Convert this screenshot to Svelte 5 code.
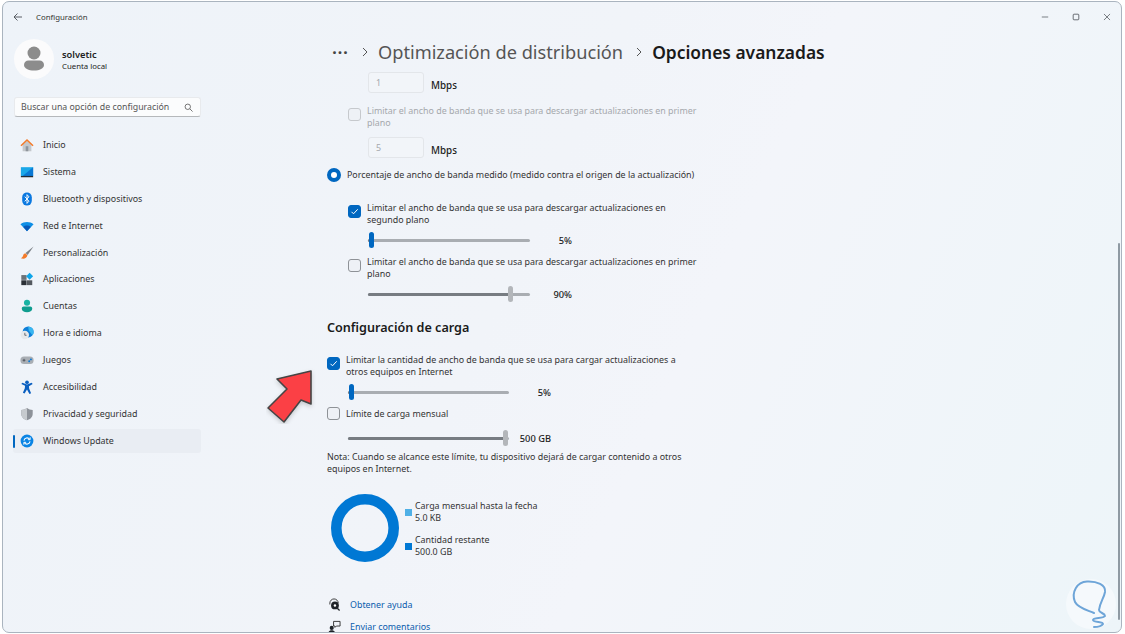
<script>
    const nav = [
        { id: 'home', label: 'Inicio' },
        { id: 'system', label: 'Sistema' },
        { id: 'bt', label: 'Bluetooth y dispositivos' },
        { id: 'wifi', label: 'Red e Internet' },
        { id: 'brush', label: 'Personalización' },
        { id: 'apps', label: 'Aplicaciones' },
        { id: 'user', label: 'Cuentas' },
        { id: 'time', label: 'Hora e idioma' },
        { id: 'games', label: 'Juegos' },
        { id: 'access', label: 'Accesibilidad' },
        { id: 'shield', label: 'Privacidad y seguridad' },
        { id: 'update', label: 'Windows Update', active: true }
    ];
</script>

{#snippet navIcon(id)}
    <svg class="nav-icon" viewBox="0 0 16 16" aria-hidden="true">
        {#if id === 'home'}
            <path d="M3 7.500 8 3l5 4.500V15H3z" fill="#c4c8cc" />
            <path d="M6.500 15V9.500h3V15z" fill="#8f959c" />
            <path d="M.5 8.300 8 1l7.500 7.300-1.200 1.100L8 3.400 1.700 9.400z" fill="#f47b2a" />
        {:else if id === 'system'}
            <rect x="1" y="2.500" width="14" height="10" fill="#1aa7e8" />
            <path d="M15 2.500v10H3z" fill="#0a78d4" />
            <rect x="1" y="12.500" width="14" height="1.500" fill="#222c36" />
        {:else if id === 'bt'}
            <rect x="2.500" y=".5" width="11" height="15" rx="5.500" fill="#0a78e0" />
            <path d="m5.500 5.300 4.700 5.200L8 13V3l2.200 2.500-4.700 5.200" fill="none" stroke="#fff" stroke-width="1.100" />
        {:else if id === 'wifi'}
            <path d="M.5 6C4.500 2.500 11.500 2.500 15.500 6L8 14z" fill="#0f8fe6" />
            <path d="M3.800 9c2.300-2 6.100-2 8.400 0L8 14z" fill="#0758b8" />
        {:else if id === 'brush'}
            <path d="M15.500.5 6.300 8l2.400 2.400z" fill="#7d8288" />
            <path d="M6 8.300c-2.300.5-2.200 2.600-2.900 3.800-.4.800-1.200 1.300-2.100 1.900 3 1 6.800.5 7.500-3.400z" fill="#f47b2a" />
        {:else if id === 'apps'}
            <rect x="1.500" y="3.500" width="6" height="5.500" fill="#6c7278" />
            <rect x="1.500" y="9.500" width="6" height="5.500" fill="#2b3036" />
            <rect x="8" y="9.500" width="6" height="5.500" fill="#54595f" />
            <path d="m11 .8 4 4-4 4-4-4z" fill="#0ea5e9" />
        {:else if id === 'user'}
            <circle cx="8" cy="4.300" r="3.500" fill="#17b3a3" />
            <path d="M2 11c0-1.400 1-2.300 2.300-2.300h7.400c1.300 0 2.300.9 2.300 2.300 0 2.600-2.700 4-6 4s-6-1.400-6-4z" fill="#0f9d8f" />
        {:else if id === 'time'}
            <circle cx="9.300" cy="6.800" r="6.300" fill="#0f7fd8" />
            <path d="M9.300.5a6.300 6.300 0 0 1 6.300 6.300c0 1.500-.5 2.800-1.400 3.800L10 5z" fill="#38b6f0" />
            <circle cx="5.500" cy="10.300" r="4.800" fill="#e6e8eb" />
            <path d="M5.500 7.800v2.800h2" fill="none" stroke="#4a5058" stroke-width=".9" />
        {:else if id === 'games'}
            <rect x=".5" y="4" width="15" height="8.500" rx="4" fill="#a9aeb4" />
            <path d="M3 8.300h3.200M4.600 6.700v3.200" stroke="#4a5058" stroke-width="1" />
            <circle cx="10.500" cy="9.500" r="1.100" fill="#0a78d4" />
            <circle cx="12.500" cy="7.300" r="1.100" fill="#0a78d4" />
        {:else if id === 'access'}
            <circle cx="8" cy="2.600" r="2.100" fill="#0a5fc0" />
            <path d="M1.500 4.500 2.700 3 8 5.200 13.300 3l1.200 1.500-4.300 2.700.3 2.800 2.200 5-1.900.9L8 10.800l-2.800 4.600-1.900-.9 2.200-5 .3-2.800z" fill="#0a5fc0" />
        {:else if id === 'shield'}
            <path d="M8 1c1.800 1.400 4 2.200 6.500 2.300v4.300c0 3.700-2.600 6.400-6.500 7.400-3.900-1-6.500-3.700-6.500-7.400V3.300C4 3.200 6.200 2.400 8 1z" fill="#8d9299" />
            <path d="M8 1C6.200 2.400 4 3.200 1.500 3.300v4.300c0 3.700 2.600 6.400 6.500 7.400z" fill="#c6cace" />
        {:else}
            <circle cx="8" cy="8" r="7.300" fill="#0a84e4" />
            <path d="M4.500 7.500A3.600 3.600 0 0 1 11 6M11.500 8.500A3.600 3.600 0 0 1 5 10" fill="none" stroke="#fff" stroke-width="1.200" />
            <path d="M11.600 3.800V6.500H9M4.400 12.200V9.500H7" fill="none" stroke="#fff" stroke-width="1.100" />
        {/if}
    </svg>
{/snippet}

{#snippet check(on, disabled)}
    <span class="box" class:on class:disabled>
        {#if on}
            <svg viewBox="0 0 13 13" aria-hidden="true"><path d="M3.500 6.800 5.500 8.800 9.700 4.300" fill="none" stroke="#fff" stroke-width="1" /></svg>
        {/if}
    </span>
{/snippet}

{#snippet slider(pct, accent, width, value, valueWidth)}
    <div class="slider-row">
        <div class="track" style="width:{width}px">
            <div class="fill" style="width:{pct}%"></div>
            <div class="thumb" class:accent style="left:calc({pct}% - 2.500px)"></div>
        </div>
        <span class="value" style="width:{valueWidth}px">{value}</span>
    </div>
{/snippet}

<div class="window">
    <header class="titlebar">
        <svg class="back" viewBox="0 0 10 10" aria-hidden="true"><path d="M9 5H1M4.500 1.500 1 5l3.500 3.500" fill="none" stroke="#4a4f55" stroke-width=".9" /></svg>
        <span class="app-title">Configuración</span>
        <div class="controls">
            <svg viewBox="0 0 10 10" aria-hidden="true"><path d="M1 5h8" stroke="#6a6f75" stroke-width="1.100" /></svg>
            <svg viewBox="0 0 10 10" aria-hidden="true"><rect x="1.500" y="1.500" width="7" height="7" rx="1" fill="none" stroke="#5a5f65" stroke-width="1.100" /></svg>
            <svg viewBox="0 0 10 10" aria-hidden="true"><path d="m1.200 1.200 7.600 7.600M8.800 1.200 1.200 8.800" stroke="#5a5f65" stroke-width="1" /></svg>
        </div>
    </header>

    <div class="body">
        <aside class="sidebar">
            <div class="profile">
                <div class="avatar">
                    <svg viewBox="0 0 40 40" aria-hidden="true">
                        <circle cx="20" cy="14" r="6.500" fill="#8c8c8c" />
                        <path d="M10 26c0-3 2-4.500 4.500-4.500h11c2.500 0 4.500 1.500 4.500 4.500 0 3.500-4.500 5.500-10 5.500S10 29.500 10 26z" fill="#8c8c8c" />
                    </svg>
                </div>
                <div class="who">
                    <strong>solvetic</strong>
                    <span>Cuenta local</span>
                </div>
            </div>

            <div class="search">
                <span>Buscar una opción de configuración</span>
                <svg viewBox="0 0 10 10" aria-hidden="true"><circle cx="4.200" cy="4.200" r="3" fill="none" stroke="#555" stroke-width=".9" /><path d="m6.500 6.500 3 3" stroke="#555" stroke-width=".9" /></svg>
            </div>

            <nav>
                {#each nav as item}
                    <div class="nav-item" class:active={item.active}>
                        {@render navIcon(item.id)}
                        <span>{item.label}</span>
                    </div>
                {/each}
            </nav>
        </aside>

        <main>
            <div class="crumbs">
                <span class="dots">···</span>
                <svg class="chev" viewBox="0 0 8 10" aria-hidden="true"><path d="m2 1 4 4-4 4" fill="none" stroke="#555" stroke-width="1" /></svg>
                <span class="crumb">Optimización de distribución</span>
                <svg class="chev" viewBox="0 0 8 10" aria-hidden="true"><path d="m2 1 4 4-4 4" fill="none" stroke="#555" stroke-width="1" /></svg>
                <span class="crumb current">Opciones avanzadas</span>
            </div>

            <div class="num-row">
                <span class="num">1</span>
                <span class="unit">Mbps</span>
            </div>

            <div class="check-row indent muted gap-12">
                {@render check(false, true)}
                <p>Limitar el ancho de banda que se usa para descargar actualizaciones en primer plano</p>
            </div>

            <div class="num-row gap-8">
                <span class="num">5</span>
                <span class="unit">Mbps</span>
            </div>

            <div class="radio-row">
                <span class="radio"></span>
                <p>Porcentaje de ancho de banda medido (medido contra el origen de la actualización)</p>
            </div>

            <div class="check-row indent gap-21">
                {@render check(true, false)}
                <p>Limitar el ancho de banda que se usa para descargar actualizaciones en segundo plano</p>
            </div>
            <div class="slider-wrap deep">{@render slider(2, true, 162, '5%', 42)}</div>

            <div class="check-row indent gap-8">
                {@render check(false, false)}
                <p>Limitar el ancho de banda que se usa para descargar actualizaciones en primer plano</p>
            </div>
            <div class="slider-wrap deep">{@render slider(88, false, 162, '90%', 42)}</div>

            <h2>Configuración de carga</h2>

            <div class="check-row first wide">
                {@render check(true, false)}
                <p>Limitar la cantidad de ancho de banda que se usa para cargar actualizaciones a otros equipos en Internet</p>
            </div>
            <div class="slider-wrap shallow">{@render slider(2, true, 161, '5%', 42)}</div>

            <div class="check-row single">
                {@render check(false, false)}
                <p>Límite de carga mensual</p>
            </div>
            <div class="slider-wrap shallow far">{@render slider(98, false, 161, '500 GB', 42)}</div>

            <p class="note">Nota: Cuando se alcance este límite, tu dispositivo dejará de cargar contenido a otros equipos en Internet.</p>

            <div class="usage">
                <svg class="donut" viewBox="0 0 68 68" aria-hidden="true">
                    <circle cx="34" cy="34" r="28.700" fill="none" stroke="#0078d4" stroke-width="10.600" />
                </svg>
                <div class="legend">
                    <div class="legend-item">
                        <i class="sq light"></i>
                        <div><p>Carga mensual hasta la fecha</p><p>5.0 KB</p></div>
                    </div>
                    <div class="legend-item">
                        <i class="sq"></i>
                        <div><p>Cantidad restante</p><p>500.0 GB</p></div>
                    </div>
                </div>
            </div>

            <div class="link-row help">
                <svg viewBox="0 0 14 14" aria-hidden="true">
                    <path d="M2 7V5.500a4.500 4.500 0 0 1 9 0" fill="none" stroke="#333" stroke-width="1" />
                    <circle cx="7.500" cy="8" r="4.200" fill="#1f2328" />
                    <path d="m10 11 2.500 2.500" stroke="#1f2328" stroke-width="1.400" />
                    <circle cx="7.500" cy="8" r="1.300" fill="#fff" />
                </svg>
                <span>Obtener ayuda</span>
            </div>
            <div class="link-row">
                <svg viewBox="0 0 14 14" aria-hidden="true">
                    <circle cx="4" cy="8.500" r="2.200" fill="#1f2328" />
                    <path d="M.500 14c0-2 1.500-3 3.500-3s3.500 1 3.500 3z" fill="#1f2328" />
                    <path d="M6 1.500h7v5H9L7.500 8V6.500H6z" fill="none" stroke="#333" stroke-width="1" />
                </svg>
                <span>Enviar comentarios</span>
            </div>
        </main>
    </div>

    <div class="scrollbar"></div>

    <!-- overlays on the screenshot -->
    <svg class="arrow" viewBox="0 0 50 56" aria-hidden="true">
        <defs>
            <filter id="arrow-shadow" x="-30%" y="-30%" width="160%" height="160%">
                <feDropShadow dx="0" dy="2" stdDeviation="2" flood-color="#000" flood-opacity=".18" />
            </filter>
        </defs>
        <path d="M45 3 11 11 21 21 2 40 18 54 35 32 45 36Z" fill="#fb4144" stroke="#454545" stroke-width="1.600" stroke-linejoin="round" filter="url(#arrow-shadow)" />
    </svg>

    <svg class="watermark" viewBox="0 0 52 52" aria-hidden="true">
        <circle cx="26" cy="26" r="25" fill="#f5f9fc" />
        <path d="M29 35C22 32 13 30 10 24 6 14 12 4 22 3.500 32 3 41 7 40 14 39 20 35 24 34 32 34 35 40 35 40 38 38 41 28 39 28 42 29 45 38 43 38 46 36 49 32 49 29 49" fill="none" stroke="#6ea5d8" stroke-width="2" stroke-linecap="round" stroke-linejoin="round" />
    </svg>
</div>

<style>
    :global(body) {
        background: #fff;
        font-family: "Noto Sans", "Liberation Sans", sans-serif;
        color: #1b1b1b;
    }

    p {
        margin: 0;
    }

    .window {
        position: relative;
        box-sizing: border-box;
        width: 1120px;
        height: 632px;
        margin: 1px 0 0 2px;
        border: 1px solid #aab4bf;
        border-radius: 7px;
        overflow: hidden;
        background: linear-gradient(115deg, #eef3f9 0%, #f1f4f9 45%, #f3f5fa 60%, #edf5f9 100%);
        font-size: 8.900px;
        line-height: 12px;
    }

    .titlebar {
        display: flex;
        align-items: center;
        height: 30px;
        padding-left: 10px;
        font-size: 7.800px;
        color: #333;
    }

    .back {
        width: 10px;
        height: 10px;
    }

    .app-title {
        margin-left: 13px;
    }

    .controls {
        display: flex;
        gap: 23px;
        margin-left: auto;
        margin-right: 10px;
    }

    .controls svg {
        width: 8px;
        height: 8px;
    }

    .body {
        display: flex;
    }

    .sidebar {
        flex: none;
        width: 207px;
        padding-left: 10px;
        box-sizing: border-box;
    }

    .profile {
        display: flex;
        align-items: center;
        gap: 8px;
        margin: 7px 0 0 1px;
    }

    .avatar {
        width: 40px;
        height: 40px;
        border-radius: 50%;
        background: #fbfbfc;
    }

    .avatar svg {
        display: block;
    }

    .who {
        display: flex;
        flex-direction: column;
        gap: 1px;
        padding-top: 2px;
        font-size: 7.800px;
        line-height: 11px;
        color: #222;
    }

    .who strong {
        font-size: 9.300px;
        font-weight: 600;
    }

    .search {
        display: flex;
        align-items: center;
        justify-content: space-between;
        box-sizing: border-box;
        width: 187px;
        height: 20px;
        margin: 18px 0 0 1px;
        padding: 0 7px 0 6px;
        background: #fbfcfd;
        border: 1px solid #e8eaed;
        border-bottom-color: #b5b8bb;
        border-radius: 3px;
        color: #555;
        font-size: 8.800px;
    }

    .search svg {
        width: 9px;
        height: 9px;
    }

    nav {
        display: flex;
        flex-direction: column;
        gap: 2.900px;
        margin-top: 16px;
    }

    .nav-item {
        position: relative;
        display: flex;
        align-items: center;
        gap: 9px;
        width: 188px;
        height: 24px;
        padding-left: 7px;
        box-sizing: border-box;
        color: #333;
        border-radius: 3px;
    }

    .nav-item.active {
        background: #e9edf3;
    }

    .nav-item.active::before {
        content: "";
        position: absolute;
        left: 0;
        top: 6px;
        width: 2px;
        height: 13px;
        background: #0067c0;
        border-radius: 1px;
    }

    .nav-icon {
        flex: none;
        width: 14px;
        height: 14px;
    }

    main {
        flex: 1;
        padding-left: 117px;
    }

    .crumbs {
        display: flex;
        align-items: center;
        height: 40px;
        font-size: 18.200px;
        padding-left: 5px;
        color: #555;
        white-space: nowrap;
    }

    .dots {
        width: 16px;
        font-size: 18px;
        font-weight: 600;
        color: #444;
        letter-spacing: .5px;
    }

    .chev {
        width: 8px;
        height: 10px;
        margin: 0 9px 0 12px;
    }

    .crumb.current {
        font-size: 17.400px;
        font-weight: 600;
        color: #1a1a1a;
    }

    .crumbs .chev:first-of-type {
        margin-left: 13px;
    }

    .num-row {
        display: flex;
        margin-left: 41px;
        gap: 7px;
    }

    .num {
        box-sizing: border-box;
        width: 56px;
        height: 21px;
        padding: 4px 7px;
        border: 1px solid #e3e6ea;
        border-radius: 3px;
        background: #f2f5f9;
        color: #a5a8ac;
    }

    .unit {
        padding-top: 8px;
        color: #222;
        font-size: 9.800px;
        font-weight: 500;
    }

    .check-row {
        display: flex;
        align-items: flex-start;
        gap: 6px;
        width: 350px;
        color: #333;
    }

    .indent {
        margin-left: 21px;
    }

    .gap-12 {
        margin-top: 12px;
    }

    .gap-8 {
        margin-top: 8px;
    }

    .gap-21 {
        margin-top: 21px;
    }

    .muted {
        color: #a5a8ac;
    }

    .first {
        margin-top: 17px;
    }

    .wide {
        width: 366px;
    }

    .single {
        align-items: center;
        margin-top: 7px;
    }

    .single .box {
        margin-top: 0;
    }

    .box {
        flex: none;
        box-sizing: border-box;
        width: 13px;
        height: 13px;
        margin-top: 3px;
        border: 1px solid #8e9297;
        border-radius: 3px;
        background: #eef1f6;
    }

    .box.on {
        background: #0067c0;
        border-color: #0067c0;
    }

    .box.disabled {
        border-color: #c6c9cd;
    }

    .box svg {
        display: block;
        margin: -1px;
        width: 13px;
        height: 13px;
    }

    .radio-row {
        display: flex;
        align-items: center;
        gap: 6px;
        margin-top: 11px;
        color: #333;
    }

    .radio {
        box-sizing: border-box;
        width: 14px;
        height: 14px;
        margin: -1px 0;
        border: 4px solid #0067c0;
        border-radius: 50%;
        background: #fff;
    }

    .slider-wrap {
        margin-top: 6px;
    }

    .deep {
        margin-left: 41px;
    }

    .shallow {
        margin-left: 21px;
    }

    .far {
        margin-top: 10px;
    }

    .slider-row {
        display: flex;
        align-items: center;
    }

    .track {
        position: relative;
        height: 3px;
        margin: 6.500px 0;
        background: #a9adb2;
        border-radius: 2px;
    }

    .fill {
        height: 100%;
        background: #777c82;
        border-radius: 2px;
    }

    .thumb {
        position: absolute;
        top: -6.500px;
        width: 5px;
        height: 16px;
        border-radius: 3px;
        background: #b3b6ba;
    }

    .thumb.accent {
        background: #0067c0;
    }

    .value {
        padding-top: 2px;
        font-size: 9.300px;
        text-align: right;
        white-space: nowrap;
        color: #222;
        font-weight: 500;
    }

    h2 {
        margin: 17px 0 0;
        font-size: 12.600px;
        line-height: 18px;
        font-weight: 600;
        color: #1a1a1a;
    }

    .note {
        width: 366px;
        margin-top: 5px;
        color: #333;
    }

    .usage {
        display: flex;
        gap: 6px;
        margin: 19px 0 0 4px;
    }

    .donut {
        display: block;
        flex: none;
        width: 68px;
        height: 68px;
    }

    .legend {
        display: flex;
        flex-direction: column;
        gap: 10px;
        margin-top: 6px;
        color: #333;
    }

    .legend-item {
        display: flex;
        align-items: center;
        gap: 3px;
    }

    .sq {
        width: 7px;
        height: 7px;
        background: #0078d4;
    }

    .sq.light {
        background: #4fb0e6;
    }

    .link-row {
        display: flex;
        align-items: center;
        gap: 9px;
        height: 13px;
        margin-top: 9px;
        margin-left: 1px;
        color: #0b5cad;
    }

    .link-row.help {
        margin-top: 36px;
    }

    .link-row svg {
        flex: none;
        width: 13px;
        height: 13px;
    }

    .scrollbar {
        position: absolute;
        right: 1px;
        top: 241px;
        bottom: 12px;
        width: 2px;
        border-radius: 1px;
        background: #8f9aa3;
    }

    .arrow {
        position: absolute;
        left: 263px;
        top: 366px;
        width: 50px;
        height: 56px;
    }

    .watermark {
        position: absolute;
        left: 1062px;
        top: 576px;
        width: 52px;
        height: 52px;
    }
</style>
